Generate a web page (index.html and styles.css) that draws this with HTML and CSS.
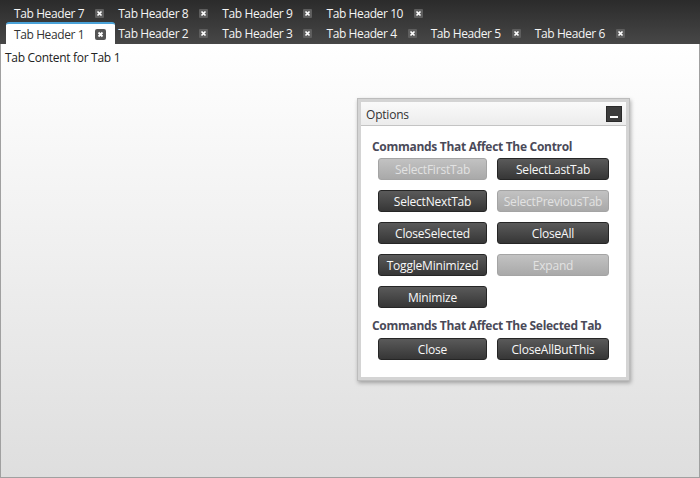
FILE: index.html
```html
<!DOCTYPE html>
<html>
<head>
<meta charset="utf-8">
<link rel="stylesheet" href="styles.css">
</head>
<body>
<div class="app">
  <div class="strip">
    <div class="row">
      <div class="tab"><span class="label">Tab Header 7</span><span class="x"><svg width="9" height="9" viewBox="0 0 9 9"><path d="M2.5 2.5L6.5 6.5M6.5 2.5L2.5 6.5" stroke="#fff" stroke-width="1.7"/></svg></span></div>
      <div class="tab"><span class="label">Tab Header 8</span><span class="x"><svg width="9" height="9" viewBox="0 0 9 9"><path d="M2.5 2.5L6.5 6.5M6.5 2.5L2.5 6.5" stroke="#fff" stroke-width="1.7"/></svg></span></div>
      <div class="tab"><span class="label">Tab Header 9</span><span class="x"><svg width="9" height="9" viewBox="0 0 9 9"><path d="M2.5 2.5L6.5 6.5M6.5 2.5L2.5 6.5" stroke="#fff" stroke-width="1.7"/></svg></span></div>
      <div class="tab"><span class="label">Tab Header 10</span><span class="x"><svg width="9" height="9" viewBox="0 0 9 9"><path d="M2.5 2.5L6.5 6.5M6.5 2.5L2.5 6.5" stroke="#fff" stroke-width="1.7"/></svg></span></div>
    </div>
    <div class="row front">
      <div class="tab selected"><span class="label">Tab Header 1</span><span class="x"><svg width="11" height="11" viewBox="0 0 11 11"><path d="M3.5 3.5L7.5 7.5M7.5 3.5L3.5 7.5" stroke="#fff" stroke-width="1.8"/></svg></span></div>
      <div class="tab"><span class="label">Tab Header 2</span><span class="x"><svg width="9" height="9" viewBox="0 0 9 9"><path d="M2.5 2.5L6.5 6.5M6.5 2.5L2.5 6.5" stroke="#fff" stroke-width="1.7"/></svg></span></div>
      <div class="tab"><span class="label">Tab Header 3</span><span class="x"><svg width="9" height="9" viewBox="0 0 9 9"><path d="M2.5 2.5L6.5 6.5M6.5 2.5L2.5 6.5" stroke="#fff" stroke-width="1.7"/></svg></span></div>
      <div class="tab"><span class="label">Tab Header 4</span><span class="x"><svg width="9" height="9" viewBox="0 0 9 9"><path d="M2.5 2.5L6.5 6.5M6.5 2.5L2.5 6.5" stroke="#fff" stroke-width="1.7"/></svg></span></div>
      <div class="tab"><span class="label">Tab Header 5</span><span class="x"><svg width="9" height="9" viewBox="0 0 9 9"><path d="M2.5 2.5L6.5 6.5M6.5 2.5L2.5 6.5" stroke="#fff" stroke-width="1.7"/></svg></span></div>
      <div class="tab"><span class="label">Tab Header 6</span><span class="x"><svg width="9" height="9" viewBox="0 0 9 9"><path d="M2.5 2.5L6.5 6.5M6.5 2.5L2.5 6.5" stroke="#fff" stroke-width="1.7"/></svg></span></div>
    </div>
  </div>
  <div class="content">
    <div class="content-text">Tab Content for Tab 1</div>
    <div class="panel">
      <div class="panel-inner">
        <div class="panel-head">
          <span class="panel-title">Options</span>
          <span class="min-btn"><span class="min-bar"></span></span>
        </div>
        <div class="panel-body">
          <div class="heading">Commands That Affect The Control</div>
          <div class="grid">
            <button class="btn disabled">SelectFirstTab</button>
            <button class="btn">SelectLastTab</button>
            <button class="btn">SelectNextTab</button>
            <button class="btn disabled">SelectPreviousTab</button>
            <button class="btn">CloseSelected</button>
            <button class="btn">CloseAll</button>
            <button class="btn">ToggleMinimized</button>
            <button class="btn disabled">Expand</button>
            <button class="btn">Minimize</button>
          </div>
          <div class="heading second">Commands That Affect The Selected Tab</div>
          <div class="grid">
            <button class="btn">Close</button>
            <button class="btn">CloseAllButThis</button>
          </div>
        </div>
      </div>
    </div>
  </div>
</div>
</body>
</html>
```

FILE: styles.css
```css
* { box-sizing: border-box; }
html, body { margin: 0; padding: 0; }
body {
  font-family: "Open Sans", "Noto Sans", "Liberation Sans", sans-serif;
  font-size: 12px;
  background: #fff;
}
.app {
  width: 700px;
  height: 478px;
  display: flex;
  flex-direction: column;
}
.strip {
  height: 44px;
  padding-top: 4px;
  background: linear-gradient(#2b2b2b, #474747);
  display: flex;
  flex-direction: column;
}
.row {
  display: flex;
  height: 18px;
  padding-left: 6px;
}
.row.front { height: 22px; }
.tab {
  display: flex;
  align-items: center;
  padding-left: 8px;
  color: #f4f4f4;
  white-space: nowrap;
  letter-spacing: -0.4px;
}
.tab .x {
  margin-left: 11px;
  margin-right: 6px;
  width: 9px;
  height: 9px;
  background: #5e5e5e;
  border-radius: 1px;
  display: flex;
}
.tab.selected {
  margin-right: -5px;
  background: #fff;
  color: #333;
  border-top: 2px solid #4aa2d8;
  border-radius: 3px 3px 0 0;
}
.tab.selected .x {
  width: 11px;
  height: 11px;
  margin-left: 11px;
  margin-right: 9px;
  background: #555;
  border-radius: 2px;
}
.content {
  flex: 1;
  position: relative;
  border: 1px solid #a0a0a0;
  border-top: none;
  background: linear-gradient(#ffffff, #dedede);
}
.content-text {
  padding: 5px 0 0 4px;
  color: #222;
  letter-spacing: -0.3px;
}
.panel {
  position: absolute;
  left: 356px;
  top: 54px;
  width: 273px;
  height: 283px;
  background: #d4d4d4;
  border: 1px solid #bcbcbc;
  padding: 3px;
  box-shadow: 1px 2px 4px rgba(0,0,0,0.3);
}
.panel-inner {
  background: #fff;
  height: 100%;
  display: flex;
  flex-direction: column;
}
.panel-head {
  height: 24px;
  display: flex;
  align-items: center;
  padding: 1px 4px 0 5px;
  background: linear-gradient(#fafafa, #ececec);
  border-bottom: 1px solid #c4c4c4;
}
.panel-title { color: #333; letter-spacing: -0.2px; }
.min-btn {
  margin-left: auto;
  width: 16px;
  height: 16px;
  background: #3c3c3c;
  border: 1px solid #2a2a2a;
  display: flex;
  align-items: flex-end;
  justify-content: center;
  padding-bottom: 3px;
}
.min-bar {
  width: 8px;
  height: 2px;
  background: #fff;
}
.panel-body {
  padding: 13px 17px 16px 11px;
}
.heading {
  font-weight: bold;
  color: #4a4a58;
  line-height: 16px;
  margin-bottom: 3px;
  letter-spacing: -0.3px;
}
.heading.second { margin-top: 10px; margin-bottom: 4px; }
.grid {
  display: grid;
  grid-template-columns: 109px 112px;
  column-gap: 10px;
  row-gap: 10px;
  margin-left: 6px;
}
.btn {
  height: 22px;
  font-family: inherit;
  font-size: 12px;
  letter-spacing: -0.2px;
  color: #f8f8f8;
  background: linear-gradient(#5a5a5a, #363636);
  border: 1px solid #262626;
  border-radius: 3px;
  padding: 0;
  white-space: nowrap;
}
.btn.disabled {
  color: #e2e2e2;
  background: linear-gradient(#c2c2c2, #a9a9a9);
  border-color: #a4a4a4;
}
```
